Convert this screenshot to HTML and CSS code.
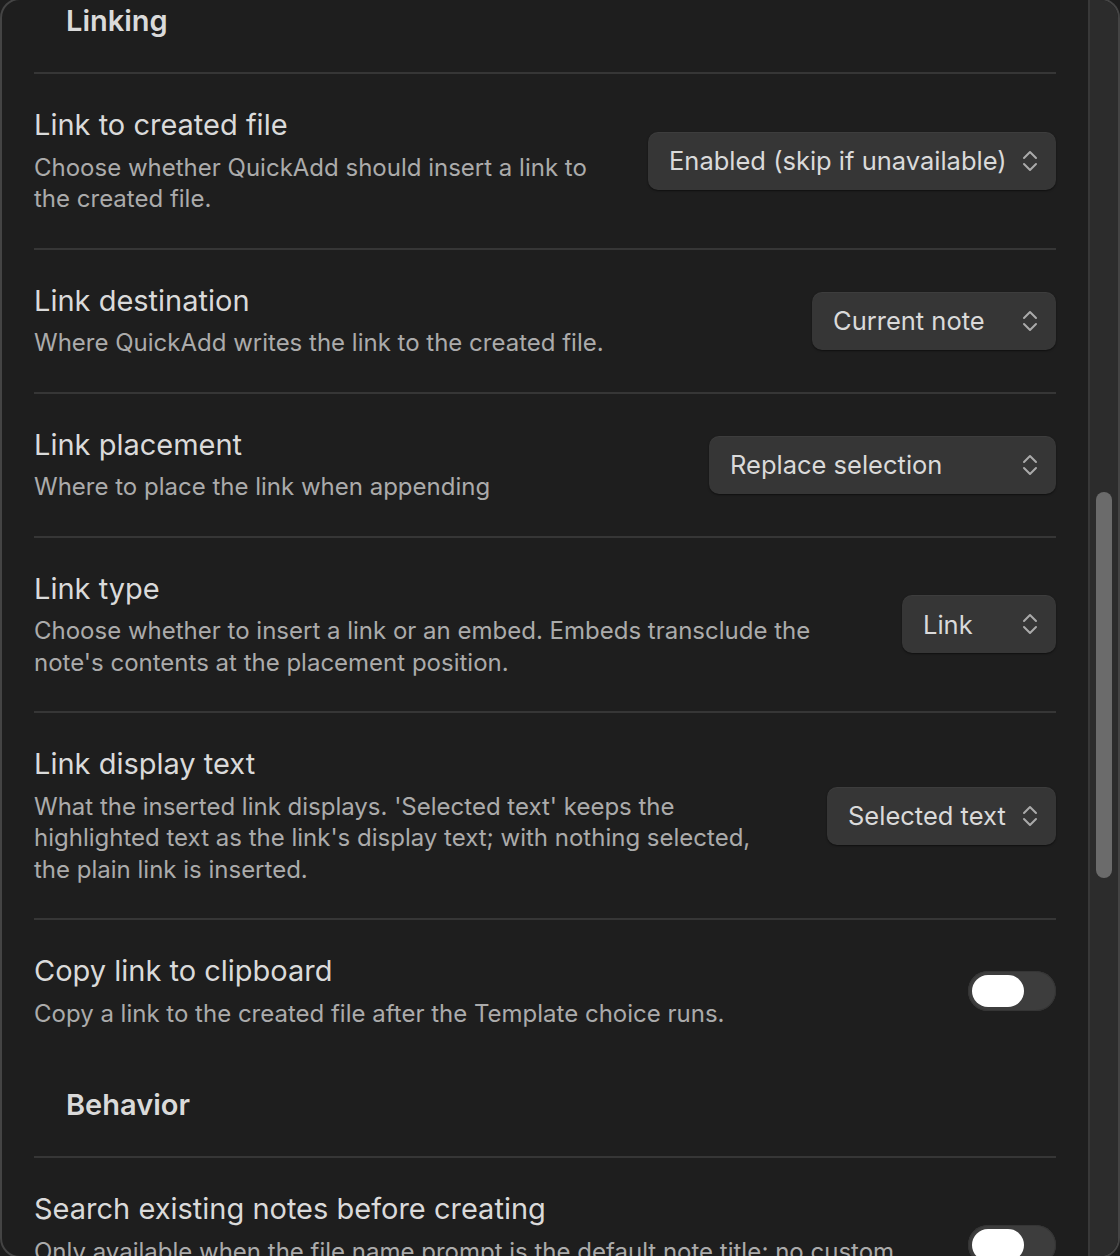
FILE: index.html
```html
<!DOCTYPE html>
<html lang="en">
<head>
<meta charset="UTF-8">
<meta name="viewport" content="width=device-width, initial-scale=1.0">
<title>QuickAdd – Template choice settings</title>
<link rel="stylesheet" href="styles.css">
</head>
<body>

<div class="modal">
  <div class="modal-content">
    <div class="settings">

      <div class="setting-heading">Linking</div>

      <div class="setting-item">
        <div class="setting-info">
          <div class="setting-name">Link to created file</div>
          <div class="setting-desc">Choose whether QuickAdd should insert a link to the created file.</div>
        </div>
        <div class="dropdown dropdown-link-file">
          <span>Enabled (skip if unavailable)</span>
          <svg class="chevrons" viewBox="0 0 16 24" width="16" height="24"><path d="M2 9 L8 3 L14 9 M2 15 L8 21 L14 15"/></svg>
        </div>
      </div>

      <div class="setting-item">
        <div class="setting-info">
          <div class="setting-name">Link destination</div>
          <div class="setting-desc">Where QuickAdd writes the link to the created file.</div>
        </div>
        <div class="dropdown dropdown-destination">
          <span>Current note</span>
          <svg class="chevrons" viewBox="0 0 16 24" width="16" height="24"><path d="M2 9 L8 3 L14 9 M2 15 L8 21 L14 15"/></svg>
        </div>
      </div>

      <div class="setting-item">
        <div class="setting-info">
          <div class="setting-name">Link placement</div>
          <div class="setting-desc">Where to place the link when appending</div>
        </div>
        <div class="dropdown dropdown-placement">
          <span>Replace selection</span>
          <svg class="chevrons" viewBox="0 0 16 24" width="16" height="24"><path d="M2 9 L8 3 L14 9 M2 15 L8 21 L14 15"/></svg>
        </div>
      </div>

      <div class="setting-item">
        <div class="setting-info">
          <div class="setting-name">Link type</div>
          <div class="setting-desc">Choose whether to insert a link or an embed. Embeds transclude the note's contents at the placement position.</div>
        </div>
        <div class="dropdown dropdown-type">
          <span>Link</span>
          <svg class="chevrons" viewBox="0 0 16 24" width="16" height="24"><path d="M2 9 L8 3 L14 9 M2 15 L8 21 L14 15"/></svg>
        </div>
      </div>

      <div class="setting-item">
        <div class="setting-info">
          <div class="setting-name">Link display text</div>
          <div class="setting-desc">What the inserted link displays. 'Selected text' keeps the highlighted text as the link's display text; with nothing selected, the plain link is inserted.</div>
        </div>
        <div class="dropdown dropdown-display">
          <span>Selected text</span>
          <svg class="chevrons" viewBox="0 0 16 24" width="16" height="24"><path d="M2 9 L8 3 L14 9 M2 15 L8 21 L14 15"/></svg>
        </div>
      </div>

      <div class="setting-item">
        <div class="setting-info">
          <div class="setting-name">Copy link to clipboard</div>
          <div class="setting-desc">Copy a link to the created file after the Template choice runs.</div>
        </div>
        <div class="toggle"><div class="knob"></div></div>
      </div>

      <div class="setting-heading">Behavior</div>

      <div class="setting-item">
        <div class="setting-info">
          <div class="setting-name">Search existing notes before creating</div>
          <div class="setting-desc">Only available when the file name prompt is the default note title; no custom format is applied.</div>
        </div>
        <div class="toggle"><div class="knob"></div></div>
      </div>

    </div>
  </div>
  <div class="scrollbar">
    <div class="thumb"></div>
  </div>
</div>

</body>
</html>
```
FILE: styles.css
```css
body {
  margin: 0;
  background-color: #1e1e1e;
  font-family: 'Inter', 'Liberation Sans', sans-serif;
  color: #dadada;
  overflow: hidden;
}
.modal {
  display: flex;
  height: 1260px;
  margin-top: -2px;
  box-sizing: border-box;
  border: 2px solid #444;
  border-radius: 20px;
  background-color: #1e1e1e;
  overflow: hidden;
}
.modal-content {
  flex: 1;
  padding: 0 32px;
  overflow: hidden;
}
.settings {
  margin-top: -22px; /* scrolled down a little */
}
.scrollbar {
  width: 28px;
  border-left: 2px solid #383838;
  background-color: #2c2c2c;
  padding-top: 492px;
}
.thumb {
  width: 16px;
  height: 386px;
  margin-left: 6px;
  border-radius: 8px;
  background-color: #6b6b6b;
}
.setting-heading {
  padding: 25px 32px 33px;
  font-size: 29px;
  line-height: 36px;
  font-weight: 600;
  color: #dadada;
}
.setting-item {
  display: flex;
  align-items: center;
  border-top: 2px solid #363636;
  padding: 33px 0;
}
.setting-info {
  flex: 1;
  margin-right: 40px;
}
.setting-name {
  font-size: 29px;
  line-height: 36px;
  color: #dadada;
}
.setting-desc {
  margin-top: 8.5px;
  font-size: 24px;
  line-height: 31.5px;
  color: #ababab;
}
.dropdown {
  display: flex;
  align-items: center;
  justify-content: space-between;
  height: 58px;
  box-sizing: border-box;
  padding: 0 18px 0 21px;
  border-radius: 10px;
  background-color: #363636;
  box-shadow: 0 1px 2px rgba(0, 0, 0, 0.5), inset 0 1px 0 rgba(255, 255, 255, 0.04);
  font-size: 25.5px;
  color: #dadada;
  flex-shrink: 0;
}
.chevrons {
  fill: none;
  stroke: #aaa;
  stroke-width: 2;
  stroke-linecap: round;
  stroke-linejoin: round;
}
.dropdown-link-file { width: 408px; }
.dropdown-destination { width: 244px; }
.dropdown-placement { width: 347px; }
.dropdown-type { width: 154px; }
.dropdown-display { width: 229px; }
.toggle {
  width: 88px;
  height: 40px;
  box-sizing: border-box;
  padding: 4px;
  border-radius: 20px;
  background-color: #3d3d3d;
  box-shadow: inset 0 0 0 1px #353535;
  flex-shrink: 0;
}
.knob {
  width: 52px;
  height: 32px;
  border-radius: 16px;
  background-color: #fff;
}
```
